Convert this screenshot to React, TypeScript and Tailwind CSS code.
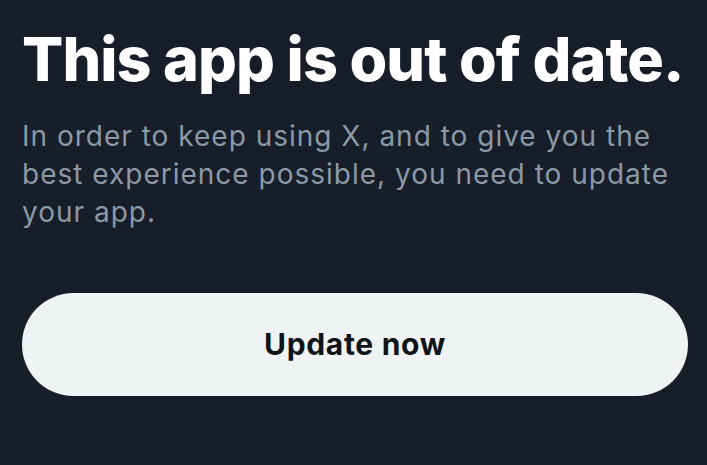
export default function App() {
  return (
    <div
      className="w-[707px] h-[465px] bg-[#171e29] px-[22px] pt-[22px] overflow-hidden"
      style={{ fontFamily: "Inter, 'Noto Sans', sans-serif" }}
    >
      <h1 className="text-[61px] leading-[74px] font-extrabold text-white tracking-[-0.9px] whitespace-nowrap">
        This app is out of date.
      </h1>
      <p className="mt-[21px] text-[28px] leading-[38px] text-[#8b98a5] tracking-[1px] whitespace-nowrap">
        In order to keep using X, and to give you the
        <br />
        best experience possible, you need to update
        <br />
        your app.
      </p>
      <button className="mt-[62px] w-[666px] h-[103px] rounded-full bg-[#eff3f4] text-[#0f1419] text-[30px] font-bold tracking-[0.7px]">
        Update now
      </button>
    </div>
  );
}
